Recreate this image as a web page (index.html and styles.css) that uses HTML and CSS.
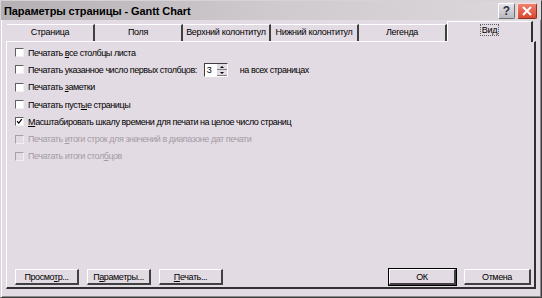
FILE: index.html
```html
<!DOCTYPE html>
<html lang="ru">
<head>
  <meta charset="UTF-8">
  <title>Параметры страницы - Gantt Chart</title>
  <link rel="stylesheet" href="styles.css">
</head>
<body>
  <div class="window">
    <div class="titlebar">
      <span class="title">Параметры страницы - Gantt Chart</span>
      <div class="caption-buttons">
        <span class="cap-btn help">?</span>
        <span class="cap-btn close">
          <svg width="12" height="12" viewBox="0 0 12 12"><path d="M2 2 L10 10 M10 2 L2 10" stroke="#fff" stroke-width="2"/></svg>
        </span>
      </div>
    </div>

    <div class="tabs">
      <div class="tab">Страница</div>
      <div class="tab">Поля</div>
      <div class="tab">Верхний колонтитул</div>
      <div class="tab">Нижний колонтитул</div>
      <div class="tab">Легенда</div>
      <div class="tab active"><span class="focus">Вид</span></div>
    </div>

    <div class="panel">
      <div class="options">
        <label class="option"><span class="box"></span><span>Печатать <u>в</u>се столбцы листа</span></label>
        <label class="option"><span class="box"></span><span>Печатать указанное число первых столбцов:</span>
          <span class="spin"><span class="spin-value">3</span><span class="spin-arrows"><i class="up"></i><i class="down"></i></span></span>
          <span class="spin-after">на всех страницах</span>
        </label>
        <label class="option"><span class="box"></span><span>Печатать <u>з</u>аметки</span></label>
        <label class="option"><span class="box"></span><span>Печатать пуст<u>ы</u>е страницы</span></label>
        <label class="option"><span class="box">
          <svg width="9" height="9" viewBox="0 0 9 9"><path d="M1.5 4 L3.5 6.5 L7.5 1.5" fill="none" stroke="#000" stroke-width="1.6"/></svg>
        </span><span><u>М</u>асштабировать шкалу времени для печати на целое число страниц</span></label>
        <label class="option disabled"><span class="box"></span><span>Печатать <u>и</u>тоги строк для значений в диапазоне дат печати</span></label>
        <label class="option disabled"><span class="box"></span><span>Печатать итоги стол<u>б</u>цов</span></label>
      </div>

      <div class="footer">
        <div class="btn-group">
          <button class="btn">Просмо<u>т</u>р...</button>
          <button class="btn">П<u>а</u>раметры...</button>
          <button class="btn"><u>П</u>ечать...</button>
        </div>
        <div class="btn-group">
          <button class="btn default">ОК</button>
          <button class="btn">Отмена</button>
        </div>
      </div>
    </div>
  </div>
</body>
</html>
```

FILE: styles.css
```css
body {
  margin: 0;
  background-color: #e3dbe3;
  font-family: "Liberation Sans", Arial, sans-serif;
}

.window {
  width: 542px;
  height: 298px;
  box-sizing: border-box;
  background-color: #e3dbe3;
  border: 1px solid #d8d2d8;
  border-right-color: #404040;
  border-bottom-color: #404040;
  box-shadow: inset 1px 1px 0 #ffffff, inset -1px -1px 0 #8c868c;
  display: flex;
  flex-direction: column;
}

.titlebar {
  height: 19px;
  display: flex;
  align-items: center;
  justify-content: space-between;
  padding: 0 4px 0 3px;
  background: linear-gradient(to right, #b4b0b4, #cecace 50%, #dcd8dc);
}

.title {
  font-weight: bold;
  font-size: 11px;
  color: #000;
  letter-spacing: -0.1px;
}

.caption-buttons {
  display: flex;
  gap: 2px;
}

.cap-btn {
  width: 17px;
  height: 16px;
  box-sizing: border-box;
  border-radius: 2px;
  display: flex;
  align-items: center;
  justify-content: center;
}

.help {
  background: linear-gradient(#e4e4e8, #b8b8c0);
  border: 1px solid #ffffff;
  border-right-color: #707070;
  border-bottom-color: #707070;
  font-weight: bold;
  font-size: 12px;
  color: #303040;
}

.close {
  width: 20px;
  background: linear-gradient(#f08070, #d84830);
  border: 1px solid #ffe0d8;
  border-right-color: #903020;
  border-bottom-color: #903020;
}

.tabs {
  display: flex;
  height: 20px;
  padding: 0 0 0 6px;
  margin-top: 1px;
  align-items: flex-end;
}

.tab {
  width: 88px;
  height: 17px;
  box-sizing: border-box;
  font-size: 9px;
  letter-spacing: -0.3px;
  color: #000;
  text-align: center;
  line-height: 15px;
  border-top: 1px solid #ffffff;
  border-right: 2px solid #404040;
  white-space: nowrap;
}

.tab.active {
  height: 21px;
  width: 86px;
  border-left: 1px solid #ffffff;
  border-right: 2px solid #303030;
  margin-bottom: -1px;
  background-color: #e3dbe3;
  position: relative;
  z-index: 1;
  line-height: 17px;
}

.focus {
  outline: 1px dotted #606060;
  padding: 0 1px;
}

.panel {
  flex: 1;
  margin: 0 5px 8px 5px;
  border-top: 1px solid #ffffff;
  border-left: 1px solid #ffffff;
  border-right: 2px solid #303030;
  border-bottom: 2px solid #303030;
  display: flex;
  flex-direction: column;
  justify-content: space-between;
  padding: 2px 0 2px 8px;
}

.options {
  display: flex;
  flex-direction: column;
}

.option {
  height: 17.3px;
  flex-shrink: 0;
  display: flex;
  align-items: center;
  font-size: 9px;
  letter-spacing: -0.45px;
  color: #000;
  white-space: nowrap;
}

.option u {
  text-decoration-thickness: 1px;
}

.option.disabled {
  color: #a49ca4;
}

.box {
  width: 9px;
  height: 9px;
  box-sizing: border-box;
  background-color: #fff;
  border-top: 1px solid #606060;
  border-left: 1px solid #606060;
  border-right: 1px solid #f0f0f0;
  border-bottom: 1px solid #f0f0f0;
  margin-right: 4px;
  display: flex;
  align-items: center;
  justify-content: center;
}

.disabled .box {
  background-color: #e3dbe3;
  border-top-color: #a8a0a8;
  border-left-color: #a8a0a8;
}

.spin {
  display: flex;
  width: 24px;
  height: 14px;
  box-sizing: border-box;
  margin-left: 7px;
  background-color: #fff;
  border-top: 1px solid #404040;
  border-left: 1px solid #404040;
  border-right: 1px solid #ffffff;
  border-bottom: 1px solid #ffffff;
}

.spin-value {
  flex: 1;
  padding-left: 2px;
  line-height: 12px;
}

.spin-arrows {
  width: 10px;
  display: flex;
  flex-direction: column;
  background-color: #e3dbe3;
}

.spin-arrows i {
  flex: 1;
  border-bottom: 1px solid #808080;
  position: relative;
}

.spin-arrows i::after {
  content: "";
  position: absolute;
  left: 3px;
  top: 2px;
  border-left: 2px solid transparent;
  border-right: 2px solid transparent;
}

.spin-arrows .up::after {
  border-bottom: 2px solid #000;
}

.spin-arrows .down::after {
  border-top: 2px solid #000;
}

.spin-after {
  margin-left: 12px;
}

.footer {
  display: flex;
  justify-content: space-between;
  padding-right: 3px;
}

.btn-group {
  display: flex;
  gap: 8px;
}

.btn {
  width: 64px;
  height: 16px;
  padding: 0;
  font-family: "Liberation Sans", Arial, sans-serif;
  font-size: 9px;
  letter-spacing: -0.4px;
  color: #000;
  background-color: #e3dbe3;
  border-top: 1px solid #ffffff;
  border-left: 1px solid #ffffff;
  border-right: 2px solid #404040;
  border-bottom: 2px solid #404040;
}

.btn-group + .btn-group .btn {
  width: 67px;
}

.btn.default {
  outline: 1px solid #000;
}
```
